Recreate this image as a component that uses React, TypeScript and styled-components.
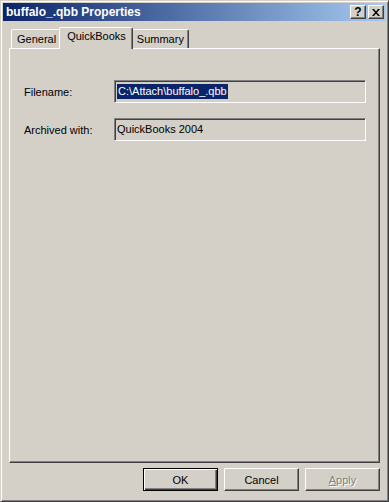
import styled, { createGlobalStyle, css } from 'styled-components';

const face = '#d4d0c8';
const shadow = '#808080';
const darkShadow = '#404040';
const highlight = '#ffffff';

const GlobalStyle = createGlobalStyle`
  html, body {
    margin: 0;
    padding: 0;
    background: ${face};
  }
  body {
    font-family: "Liberation Sans", Arial, sans-serif;
    font-size: 11px;
    color: #000;
  }
`;

const Styled = {
  Window: styled.div`
    box-sizing: border-box;
    width: 389px;
    height: 502px;
    display: flex;
    flex-direction: column;
    padding: 2px;
    background: ${face};
    border: 1px solid;
    border-color: ${face} ${darkShadow} ${darkShadow} ${face};
    box-shadow: inset 1px 1px 0 ${highlight}, inset -1px -1px 0 ${shadow};
  `,
  TitleBar: styled.div`
    height: 18px;
    display: flex;
    align-items: center;
    padding: 0 2px 0 3px;
    background: linear-gradient(to right, #0a246a, #a6caf0);
    color: #fff;
    font-weight: bold;
    font-size: 12px;
  `,
  Title: styled.div`
    flex: 1;
    white-space: nowrap;
  `,
  TitleButton: styled.div<{ $gap?: boolean }>`
    box-sizing: border-box;
    width: 16px;
    height: 14px;
    margin-left: ${(p) => (p.$gap ? 2 : 0)}px;
    background: ${face};
    border: 1px solid;
    border-color: ${highlight} ${darkShadow} ${darkShadow} ${highlight};
    box-shadow: inset -1px -1px 0 ${shadow};
    color: #000;
    display: flex;
    align-items: center;
    justify-content: center;
    font-size: 12px;
    font-weight: bold;
    line-height: 1;
  `,
  Body: styled.div`
    flex: 1;
    display: flex;
    flex-direction: column;
    padding: 6px 6px 0 6px;
  `,
  TabStrip: styled.div`
    display: flex;
    align-items: flex-end;
    height: 21px;
    padding-left: 2px;
    position: relative;
    z-index: 1;
  `,
  Tab: styled.div<{ $active?: boolean }>`
    box-sizing: border-box;
    height: 19px;
    padding: 3px 4px 0 5px;
    background: ${face};
    border-top: 1px solid ${highlight};
    border-left: 1px solid ${highlight};
    border-right: 1px solid ${darkShadow};
    border-radius: 2px 2px 0 0;
    box-shadow: inset -1px 0 0 ${shadow};
    white-space: nowrap;
    ${(p) =>
      p.$active &&
      css`
        height: 22px;
        margin: 0 -2px -1px;
        padding: 2px 6px 0 7px;
        position: relative;
        z-index: 2;
      `}
  `,
  Panel: styled.div`
    box-sizing: border-box;
    height: 415px;
    border: 1px solid;
    border-color: ${highlight} ${darkShadow} ${darkShadow} ${highlight};
    box-shadow: inset -1px -1px 0 ${shadow};
    padding: 31px 12px 0 14px;
    display: flex;
    flex-direction: column;
    gap: 15px;
  `,
  Row: styled.div`
    display: flex;
    align-items: center;
  `,
  Label: styled.div`
    width: 90px;
    padding-top: 1px;
  `,
  Field: styled.div`
    box-sizing: border-box;
    width: 252px;
    height: 23px;
    border: 1px solid;
    border-color: ${shadow} ${highlight} ${highlight} ${shadow};
    box-shadow: inset 1px 1px 0 ${darkShadow};
    padding: 4px 0 0 2px;
    white-space: nowrap;
  `,
  Selected: styled.span`
    background: #0a246a;
    color: #fff;
    padding: 1px 1px 2px 1px;
  `,
  Buttons: styled.div`
    display: flex;
    justify-content: flex-end;
    gap: 6px;
    padding: 5px 0 0 0;
  `,
  Button: styled.div<{ $default?: boolean; $disabled?: boolean }>`
    box-sizing: border-box;
    width: 75px;
    height: 23px;
    display: flex;
    align-items: center;
    justify-content: center;
    background: ${face};
    border: 1px solid;
    border-color: ${highlight} ${darkShadow} ${darkShadow} ${highlight};
    box-shadow: inset -1px -1px 0 ${shadow};
    ${(p) =>
      p.$default &&
      css`
        border: 1px solid #000;
        box-shadow: inset 1px 1px 0 ${highlight}, inset -1px -1px 0 ${darkShadow},
          inset -2px -2px 0 ${shadow};
      `}
    ${(p) =>
      p.$disabled &&
      css`
        color: ${shadow};
        text-shadow: 1px 1px 0 ${highlight};
      `}
  `,
};

export const App = () => (
  <>
    <GlobalStyle />
    <Styled.Window>
      <Styled.TitleBar>
        <Styled.Title>buffalo_.qbb Properties</Styled.Title>
        <Styled.TitleButton>?</Styled.TitleButton>
        <Styled.TitleButton $gap>
          <svg width="8" height="7" viewBox="0 0 8 7">
            <path d="M0 0h2l2 2.5L6 0h2L5 3.5 8 7H6L4 4.5 2 7H0l3-3.5z" fill="#000" />
          </svg>
        </Styled.TitleButton>
      </Styled.TitleBar>
      <Styled.Body>
        <Styled.TabStrip>
          <Styled.Tab>General</Styled.Tab>
          <Styled.Tab $active>QuickBooks</Styled.Tab>
          <Styled.Tab>Summary</Styled.Tab>
        </Styled.TabStrip>
        <Styled.Panel>
          <Styled.Row>
            <Styled.Label>Filename:</Styled.Label>
            <Styled.Field>
              <Styled.Selected>C:\Attach\buffalo_.qbb</Styled.Selected>
            </Styled.Field>
          </Styled.Row>
          <Styled.Row>
            <Styled.Label>Archived with:</Styled.Label>
            <Styled.Field>QuickBooks 2004</Styled.Field>
          </Styled.Row>
        </Styled.Panel>
        <Styled.Buttons>
          <Styled.Button $default>OK</Styled.Button>
          <Styled.Button>Cancel</Styled.Button>
          <Styled.Button $disabled>
            <u>A</u>pply
          </Styled.Button>
        </Styled.Buttons>
      </Styled.Body>
    </Styled.Window>
  </>
);

export default App;
